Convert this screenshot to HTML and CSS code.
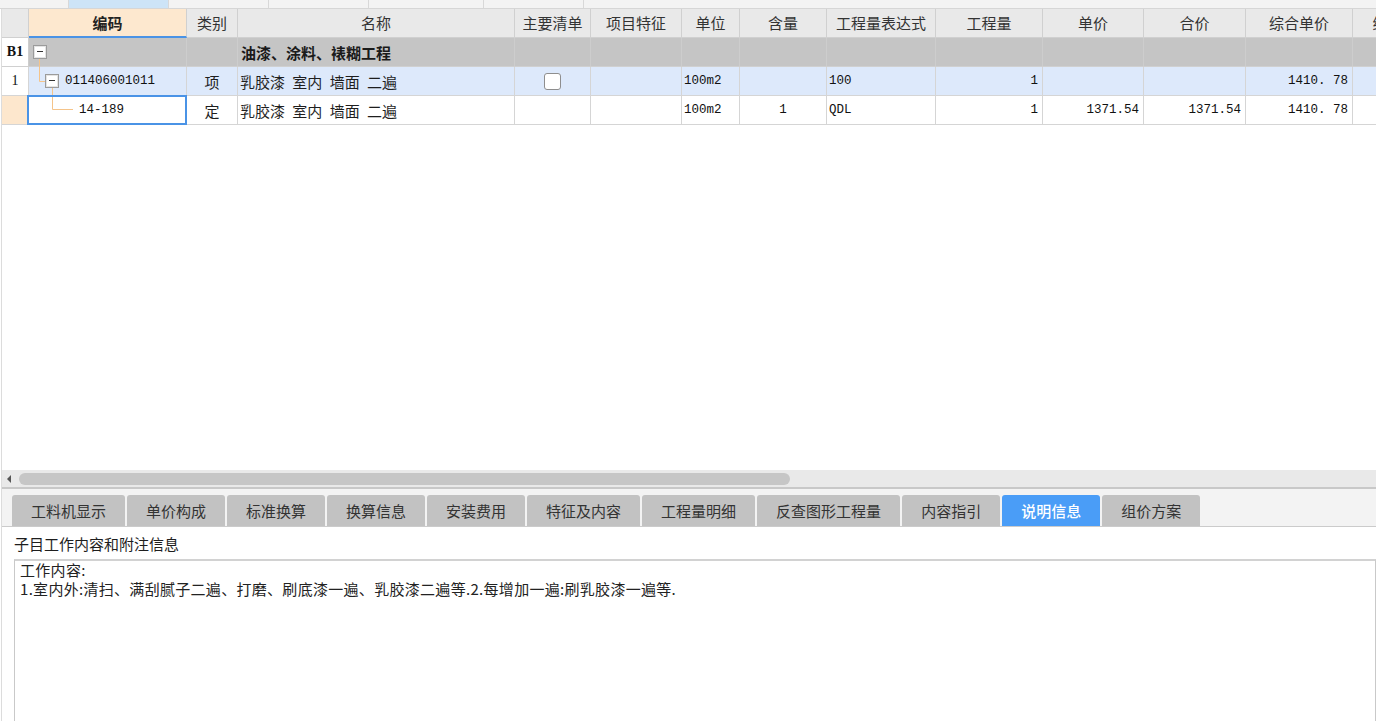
FILE: index.html
```html
<!DOCTYPE html>
<html lang="zh-CN">
<head>
<meta charset="utf-8">
<title>分部分项</title>
<link rel="stylesheet" href="styles.css">
</head>
<body>
<div class="app">
  <div class="topstrip">
    <div class="seg w69"></div>
    <div class="seg w100 sel"></div>
    <div class="seg w100"></div>
    <div class="seg w100"></div>
    <div class="seg w115"></div>
    <div class="seg w100"></div>
    <div class="seg rest"></div>
  </div>

  <div class="grid">
    <div class="row head">
      <div class="c"></div>
      <div class="c center code-head">编码</div>
      <div class="c center">类别</div>
      <div class="c center">名称</div>
      <div class="c center">主要清单</div>
      <div class="c center">项目特征</div>
      <div class="c center">单位</div>
      <div class="c center">含量</div>
      <div class="c center">工程量表达式</div>
      <div class="c center">工程量</div>
      <div class="c center">单价</div>
      <div class="c center">合价</div>
      <div class="c center">综合单价</div>
      <div class="c center">综合合价</div>
    </div>

    <div class="row group">
      <div class="c center num bold">B1</div>
      <div class="c tree lvl0"><span class="toggle"></span></div>
      <div class="c"></div>
      <div class="c cjk bold">油漆、涂料、裱糊工程</div>
      <div class="c"></div>
      <div class="c"></div>
      <div class="c"></div>
      <div class="c"></div>
      <div class="c"></div>
      <div class="c"></div>
      <div class="c"></div>
      <div class="c"></div>
      <div class="c"></div>
      <div class="c"></div>
    </div>

    <div class="row item">
      <div class="c center num">1</div>
      <div class="c tree lvl1"><span class="toggle"></span><span class="mono code">011406001011</span></div>
      <div class="c center cjk">项</div>
      <div class="c cjk name">乳胶漆 室内 墙面 二遍</div>
      <div class="c center"><span class="chk"></span></div>
      <div class="c"></div>
      <div class="c mono">100m2</div>
      <div class="c"></div>
      <div class="c mono">100</div>
      <div class="c right mono">1</div>
      <div class="c"></div>
      <div class="c"></div>
      <div class="c right mono">1410. 78</div>
      <div class="c"></div>
    </div>

    <div class="row quota">
      <div class="c rowsel"></div>
      <div class="c tree lvl2 focus"><span class="mono code">14-189</span></div>
      <div class="c center cjk">定</div>
      <div class="c cjk name">乳胶漆 室内 墙面 二遍</div>
      <div class="c"></div>
      <div class="c"></div>
      <div class="c mono">100m2</div>
      <div class="c center mono">1</div>
      <div class="c mono">QDL</div>
      <div class="c right mono">1</div>
      <div class="c right mono">1371.54</div>
      <div class="c right mono">1371.54</div>
      <div class="c right mono">1410. 78</div>
      <div class="c"></div>
    </div>

    <svg class="treelines" width="200" height="130" viewBox="0 0 200 130" aria-hidden="true">
      <path d="M37.5 50 V72.5 H43" fill="none" stroke="#f5c48a" stroke-width="1"/>
      <path d="M50.5 79 V100.5 H71" fill="none" stroke="#f5c48a" stroke-width="1"/>
    </svg>
  </div>

  <div class="hscroll">
    <span class="arrow"></span>
    <span class="thumb"></span>
  </div>

  <div class="tabbar">
    <div class="tab">工料机显示</div>
    <div class="tab">单价构成</div>
    <div class="tab">标准换算</div>
    <div class="tab">换算信息</div>
    <div class="tab">安装费用</div>
    <div class="tab">特征及内容</div>
    <div class="tab">工程量明细</div>
    <div class="tab">反查图形工程量</div>
    <div class="tab">内容指引</div>
    <div class="tab active">说明信息</div>
    <div class="tab">组价方案</div>
  </div>

  <div class="desc-label">子目工作内容和附注信息</div>
  <div class="desc-box">
    <div class="desc-line">工作内容:</div>
    <div class="desc-line">1.室内外:清扫、满刮腻子二遍、打磨、刷底漆一遍、乳胶漆二遍等.2.每增加一遍:刷乳胶漆一遍等.</div>
  </div>
</div>
</body>
</html>
```
FILE: styles.css
```css
html, body {
  margin: 0;
  padding: 0;
  background: #ffffff;
  overflow: hidden;
}

body {
  width: 1376px;
  height: 721px;
  font-family: "Noto Sans CJK SC", "Noto Sans", sans-serif;
  font-size: 15px;
  color: #333333;
}

.app {
  margin-left: 1px;
  border-left: 1px solid #dcdcdc;
  height: 721px;
  display: flex;
  flex-direction: column;
}

/* top strip */
.topstrip {
  height: 8px;
  flex: 0 0 auto;
  display: flex;
  background: #f3f3f3;
  border-bottom: 1px solid #d6d6d6;
  margin-left: -2px;
}
.seg {
  box-sizing: border-box;
  height: 8px;
  border-right: 1px solid #d8d8d8;
}
.seg.w69 { width: 69px; }
.seg.w100 { width: 100px; }
.seg.w115 { width: 115px; }
.seg.rest { flex: 1; border-right: none; }
.seg.sel { background: #cde4f7; }

/* grid */
.grid {
  position: relative;
  height: 461px;
  flex: 0 0 auto;
  overflow: hidden;
  background: #ffffff;
}
.row {
  display: grid;
  grid-template-columns: 27px 158px 51px 277px 76px 91px 58px 87px 109px 107px 101px 102px 107px 100px;
  height: 29px;
  width: 1452px;
}
.c {
  box-sizing: border-box;
  border-right: 1px solid #d5d5d5;
  border-bottom: 1px solid #d5d5d5;
  display: flex;
  align-items: center;
  padding: 0 2px;
  white-space: nowrap;
  overflow: hidden;
  color: #1e1e1e;
}
.center { justify-content: center; }
.right { justify-content: flex-end; padding-right: 4px; }

.head .c {
  background: #e9e9e9;
  color: #333333;
  border-right-color: #d0d0d0;
  border-bottom-color: #d0d0d0;
  padding-bottom: 1px;
}
.head .code-head {
  background: #fde8cf;
  font-weight: 700;
  color: #222222;
  border-bottom: 2px solid #4a93e6;
  padding-bottom: 0;
}

.group .c { background: #c5c5c5; border-right-color: #cdcdcd; border-bottom-color: #d0d0d0; }
.item .c { background: #dde9fb; }
.group .c:first-child,
.item .c:first-child { background: #ffffff; }
.quota .c { background: #ffffff; }
.quota .rowsel { background: #fde7cd; }

.num {
  font-family: "Liberation Serif", serif;
  font-size: 14px;
  color: #111111;
  padding: 0;
}
.bold { font-weight: 700; }
.cjk { font-size: 15px; color: #1e1e1e; }
.group .cjk { color: #1a1a1a; padding-left: 3px; }
.name { word-spacing: 4px; }

.mono {
  font-family: "Liberation Mono", monospace;
  font-size: 12.5px;
  color: #111111;
}

/* tree cells */
.tree { position: relative; }
.tree.lvl0 { padding-left: 4px; }
.tree.lvl1 { padding-left: 16px; }
.tree.lvl2 { padding-left: 50px; }
.toggle {
  position: relative;
  box-sizing: border-box;
  width: 14px;
  height: 14px;
  flex: 0 0 auto;
  border: 1px solid #9b9b9b;
  background: #ffffff;
  box-shadow: inset 0 0 0 1px #e4e4e4;
}
.toggle::after {
  content: "";
  position: absolute;
  left: 3px;
  right: 3px;
  top: 5px;
  height: 1px;
  background: #333333;
}
.code { margin-left: 6px; }
.lvl2 .code { margin-left: 0; }

.focus { overflow: visible; }
.focus::after {
  content: "";
  position: absolute;
  left: -2px;
  top: -1px;
  right: -1px;
  bottom: -1px;
  border: 2px solid #4a93e6;
  z-index: 3;
  pointer-events: none;
}

.treelines {
  position: absolute;
  left: 0;
  top: 0;
  z-index: 2;
  pointer-events: none;
}

.chk {
  box-sizing: border-box;
  width: 17px;
  height: 17px;
  border: 1px solid #8e8e8e;
  border-radius: 3px;
  background: #ffffff;
}

/* horizontal scrollbar */
.hscroll {
  height: 17px;
  flex: 0 0 auto;
  background: #e9e9e9;
  border-bottom: 2px solid #c8c8c8;
  display: flex;
  align-items: center;
}
.arrow {
  width: 0;
  height: 0;
  margin-left: 5px;
  border-top: 4px solid transparent;
  border-bottom: 4px solid transparent;
  border-right: 4px solid #555555;
}
.thumb {
  margin-left: 8px;
  width: 771px;
  height: 12px;
  border-radius: 6px;
  background: #c6c6c6;
}

/* tab bar */
.tabbar {
  height: 37px;
  flex: 0 0 auto;
  background: #f3f3f3;
  border-bottom: 1px solid #cbcbcb;
  display: flex;
  align-items: flex-end;
  gap: 2px;
  padding-left: 10px;
}
.tab {
  height: 31px;
  padding: 0 19px;
  display: flex;
  align-items: center;
  background: #c2c2c2;
  color: #333333;
  border-radius: 3px 3px 0 0;
  font-size: 15px;
  white-space: nowrap;
}
.tab.active {
  background: #4a9df7;
  color: #ffffff;
  font-weight: 500;
}

/* description */
.desc-label {
  height: 32px;
  flex: 0 0 auto;
  display: flex;
  align-items: center;
  padding-left: 12px;
  color: #1e1e1e;
  font-size: 15px;
}
.desc-box {
  margin-left: 12px;
  flex: 1 0 auto;
  border: 1px solid #c9c9c9;
  border-top: 2px solid #d2d2d2;
  border-bottom: none;
  padding: 0 5px;
  background: #ffffff;
}
.desc-line {
  font-size: 15px;
  line-height: 19px;
  height: 19px;
  overflow: hidden;
  color: #222222;
  white-space: nowrap;
  letter-spacing: 0.3px;
}
.desc-line:first-child { margin-top: -1px; }
```
